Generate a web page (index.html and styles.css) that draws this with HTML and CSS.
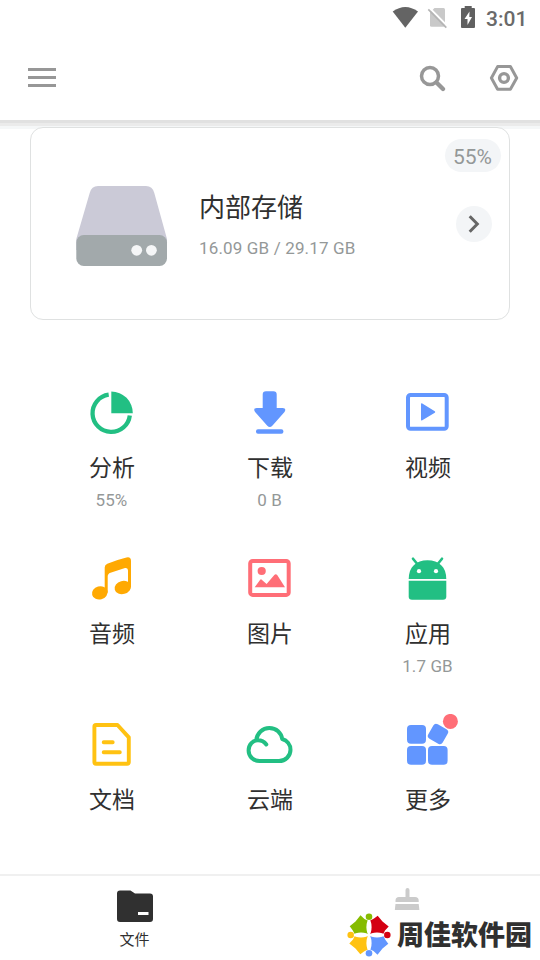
FILE: index.html
```html
<!DOCTYPE html>
<html lang="zh-CN">
<head>
<meta charset="utf-8">
<title>文件</title>
<link rel="stylesheet" href="styles.css">
</head>
<body>
<div class="screen">
  <div class="status">
    <svg width="84" height="24" viewBox="392 5 84 24">
      <path fill="#646464" d="M392.7 11.5Q405.3 2.5 418 11.5L405.3 27.8Z"/>
      <path fill="#c9c9c9" d="M434.5 8H443.5Q445 8 445 9.5V25.2Q445 26.7 443.5 26.7H431.5Q430 26.7 430 25.2V12.5Z"/>
      <path stroke="#fff" stroke-width="2" d="M430 8.5L448 26.8"/>
      <path stroke="#b5b5b5" stroke-width="1.7" d="M428.3 9.3L446.3 27.7"/>
      <path fill="#606060" d="M464.7 6H471.7V8H474Q475 8 475 9V27Q475 28 474 28H462Q461 28 461 27V9Q461 8 462 8H464.7Z"/>
      <path fill="#fff" d="M469.5 11.5L464.5 19H467.5V25L472 17H469.3Z"/>
    </svg>
    <span class="clock">3:01</span>
  </div>
  <header class="toolbar">
    <svg class="menu" width="28" height="20" viewBox="28 68 28 20"><path stroke="#979797" stroke-width="3" d="M28 69.5H56M28 77.5H56M28 85.5H56"/></svg>
    <svg width="28" height="28" viewBox="418 64 28 28" fill="none" stroke="#979797">
      <circle cx="430" cy="76" r="8.500" stroke-width="3.500"/><path d="M436.500 82.500L443 89" stroke-width="4.300" stroke-linecap="round"/>
    </svg>
    <svg width="30" height="28" viewBox="489 64 30 28" fill="none" stroke="#979797" stroke-linejoin="round">
      <path stroke-width="3" d="M497.600 66.600H510.400L516.700 78L510.400 89.300H497.600L491.400 78Z"/><circle cx="504" cy="78" r="4.400" stroke-width="3.400"/>
    </svg>
  </header>
  <div class="shade"></div>

  <section class="card">
    <svg class="drive" width="92" height="82" viewBox="76 185 92 82">
      <path fill="#cbcad7" d="M98 186H146Q152.500 186 154.300 193L167 239V250H76.300V239L89.700 193Q91.500 186 98 186Z"/>
      <rect x="76.300" y="235" width="90.700" height="31" rx="7.500" fill="#a2a9ab"/>
      <circle cx="136.700" cy="250.300" r="5.400" fill="#f5f6f7"/><circle cx="151.400" cy="250.300" r="5.400" fill="#f5f6f7"/>
    </svg>
    <div class="storage">
      <div class="name">内部存储</div>
      <div class="usage">16.09 GB / 29.17 GB</div>
    </div>
    <div class="side">
      <span class="percent">55%</span>
      <span class="go"><svg width="14" height="20" viewBox="467 214 14 20"><path fill="none" stroke="#666" stroke-width="3" d="M469.700 216.300L477.300 224L469.700 231.700"/></svg></span>
    </div>
  </section>

  <main class="grid">
    <div class="item">
      <svg class="icon" viewBox="0 0 60 60">
        <path fill="#22bf83" d="M29.300 31.200V9.500A21.500 21.500 0 0 1 50.800 31.200Z"/>
        <path fill="none" stroke="#22bf83" stroke-width="4.300" d="M26.700 12.700A18.700 18.700 0 1 0 47.800 33.400"/>
      </svg>
      <div class="label">分析</div><div class="sub">55%</div>
    </div>
    <div class="item">
      <svg class="icon" viewBox="0 0 60 60" fill="#6296ff">
        <path d="M26 9.300H33.400Q36.700 9.300 36.700 12.600V26H42.700Q46.800 26.400 44.500 30L32.300 43.700Q29.800 46.200 27.300 43.700L15.100 30Q12.700 26.400 16.700 26H22.700V12.600Q22.700 9.300 26 9.300Z"/>
        <rect x="16" y="47.200" width="27.400" height="4.500" rx="2"/>
      </svg>
      <div class="label">下载</div><div class="sub">0 B</div>
    </div>
    <div class="item">
      <svg class="icon" viewBox="0 0 60 60">
        <rect x="10" y="13" width="38.700" height="33.800" rx="2.500" fill="none" stroke="#6296ff" stroke-width="4"/>
        <path fill="#6296ff" d="M23 22.300Q23 20.800 24.300 21.600L36.800 29.300Q37.800 30 36.800 30.700L24.300 38.200Q23 39 23 37.500Z"/>
      </svg>
      <div class="label">视频</div>
    </div>
    <div class="item">
      <svg class="icon" viewBox="0 0 60 60" fill="#ffa902">
        <path d="M22.700 42V19.500Q22.700 16.800 25.300 15.700Q35 11.800 44.500 9.500Q49 8.500 49 13V39H46V22.500Q46 19.400 43 20.100L28.500 24.800Q25.700 25.700 25.700 28.500V45Z"/>
        <ellipse cx="17.800" cy="44.900" rx="7.900" ry="6.600" transform="rotate(-15 17.800 44.900)"/>
        <ellipse cx="40.800" cy="39.500" rx="8.300" ry="6.500" transform="rotate(-15 40.800 39.500)"/>
      </svg>
      <div class="label">音频</div>
    </div>
    <div class="item">
      <svg class="icon" viewBox="0 0 60 60" fill="#ff6e77">
        <rect x="10.200" y="13" width="38.500" height="33.900" rx="2.500" fill="none" stroke="#ff6e77" stroke-width="4"/>
        <circle cx="21.700" cy="23" r="4.100"/>
        <path d="M14.700 39.200L20 31.900Q21 30.800 22 31.900L26.600 36L34.300 27Q35.700 25.500 37.200 27L45 39.200Z"/>
      </svg>
      <div class="label">图片</div>
    </div>
    <div class="item">
      <svg class="icon" viewBox="0 0 60 60" fill="#22bf83">
        <path d="M10.700 31C10.700 19 18 12.200 29.500 12.200S48.300 19 48.300 31Z"/>
        <path d="M10.700 32.700H48.300V48.500Q48.300 51.700 45 51.700H14Q10.700 51.700 10.700 48.500Z"/>
        <path fill="none" stroke="#22bf83" stroke-width="2.600" stroke-linecap="round" d="M15 10.700L19.500 16.200M44 10.700L39.500 16.200"/>
        <circle cx="21" cy="23.200" r="2.100" fill="#fff"/><circle cx="38" cy="23.200" r="2.100" fill="#fff"/>
      </svg>
      <div class="label">应用</div><div class="sub">1.7 GB</div>
    </div>
    <div class="item">
      <svg class="icon" viewBox="0 0 60 60" fill="none" stroke="#ffc212" stroke-width="3.900" stroke-linejoin="round" stroke-linecap="round">
        <path d="M14 11H35.500L46.800 23.400V48Q46.800 49.700 45 49.700H14Q12.400 49.700 12.400 48V12.700Q12.400 11 14 11Z"/>
        <path d="M21.700 28.300H30.700M21.700 38.300H37.800"/>
      </svg>
      <div class="label">文档</div>
    </div>
    <div class="item">
      <svg class="icon" viewBox="0 0 60 60" fill="none" stroke="#22bf83" stroke-width="4" stroke-linejoin="round" stroke-linecap="round">
        <path d="M16.200 26.400C17 19 22.500 14 29.300 14C36.500 14 41.300 19 42.200 25C47 26.400 50.500 30.500 50.500 35.700C50.500 42 45.500 47 39 47H19.500C13.500 47 8.600 42.500 8.600 36.500C8.600 30.500 13 26.300 18 26.300C21.500 26.300 24.300 27.800 26.300 30.500"/>
      </svg>
      <div class="label">云端</div>
    </div>
    <div class="item">
      <svg class="icon" viewBox="0 0 60 60" fill="#6296ff">
        <rect x="9" y="11" width="19" height="18.800" rx="4"/><rect x="9" y="32" width="19" height="18.800" rx="4"/><rect x="30" y="32" width="19.600" height="18.800" rx="4"/>
        <rect x="31.700" y="11.700" width="16.600" height="16.600" rx="3.300" transform="rotate(30 40 20)"/>
        <circle cx="52.400" cy="7.400" r="7.500" fill="#ff6e77"/>
      </svg>
      <div class="label">更多</div>
    </div>
  </main>

  <nav class="tabs">
    <div class="tab files">
      <svg width="36" height="33" viewBox="117 890 36 33">
        <path fill="#303030" d="M120 890.500H130.500L135 893.500H150Q153 893.500 153 896.500V919Q153 922 150 922H120Q117 922 117 919V893.500Q117 890.500 120 890.500Z"/>
        <path stroke="#fff" stroke-width="3" d="M138 913.500H148.500"/>
      </svg>
      <span>文件</span>
    </div>
    <div class="tab clean">
      <svg width="26" height="24" viewBox="394 887 26 24" fill="#cbcbcb">
        <path d="M405.500 897V890Q405.500 888 407.500 888T409.500 890V897H415Q418.700 897 418.700 900.500V902H395.500V900.500Q395.500 897 399 897Z"/>
        <path d="M395.500 904H418.700L419.400 910H394.800Z"/>
      </svg>
    </div>
  </nav>
  <div class="brand">
    <svg width="44" height="44" viewBox="-22 -22 44 44">
      <g fill="#86bc00"><circle cy="-18.300" r="3.300"/><path d="M0 0L-14 -.5L-16.500 -5L-19.300 -8.700L-13.500 -13.500L-8.500 -19.700L-4.500 -16L-.5 -14Z"/></g>
      <g fill="#d40012" transform="rotate(90)"><circle cy="-18.300" r="3.300"/><path d="M0 0L-14 -.5L-16.500 -5L-19.300 -8.700L-13.500 -13.500L-8.500 -19.700L-4.500 -16L-.5 -14Z"/></g>
      <g fill="#6296ff" transform="rotate(180)"><circle cy="-18.300" r="3.300"/><path d="M0 0L-14 -.5L-16.500 -5L-19.300 -8.700L-13.500 -13.500L-8.500 -19.700L-4.500 -16L-.5 -14Z"/></g>
      <g fill="#ffc212" transform="rotate(270)"><circle cy="-18.300" r="3.300"/><path d="M0 0L-14 -.5L-16.500 -5L-19.300 -8.700L-13.500 -13.500L-8.500 -19.700L-4.500 -16L-.5 -14Z"/></g>
      <g fill="#fff"><ellipse cy="-8" rx="2.600" ry="7.300"/><ellipse cy="8" rx="2.600" ry="7.300"/><ellipse cx="-8" rx="7.300" ry="2.600"/><ellipse cx="8" rx="7.300" ry="2.600"/><circle r="2"/></g>
    </svg>
    <span>周佳软件园</span>
  </div>
</div>
</body>
</html>
```

FILE: styles.css
```css
* { box-sizing: border-box; }
body { margin: 0; background: #fff; font-family: Roboto, "Noto Sans CJK SC", sans-serif; color: #303030; }
svg { display: block; flex: none; }
.screen { position: relative; width: 540px; height: 960px; display: flex; flex-direction: column; overflow: hidden; }
.status { height: 36px; padding: 5px 13px 0 0; display: flex; justify-content: flex-end; gap: 10px; }
.clock { font-size: 21px; line-height: 28px; font-weight: 500; color: #6a6a6a; width: 41px; white-space: nowrap; }
.toolbar { height: 84px; padding: 0 21px 0 28px; display: flex; align-items: center; gap: 43px; }
.menu { margin: 0 auto 1px 0; }
.shade { height: 9px; flex: none; background: linear-gradient(#e1e1e1 3px, #ebebeb 3px, #ebebeb 6px, #f5f7f8 6px); }
.card { height: 193px; flex: none; margin: -2px 30px 0; padding: 11px 8px 0 45px; border: 1px solid #dfe1e1; border-radius: 13px; display: flex; background: #fff; }
.drive { margin-top: 46px; }
.storage { margin: 50px 0 0 31px; }
.name { font-size: 26px; line-height: 38px; }
.usage { margin-top: 9px; font-size: 17px; line-height: 24px; letter-spacing: 0.15px; color: #949898; white-space: nowrap; }
.side { margin-left: auto; width: 57px; display: flex; flex-direction: column; align-items: center; }
.percent { width: 56px; height: 33px; line-height: 36px; border-radius: 17px; background: #f3f5f7; color: #949898; font-size: 21px; text-align: center; }
.go { width: 36px; height: 36px; margin: 34px 0 0 3px; border-radius: 50%; background: #f3f5f7; display: flex; align-items: center; justify-content: center; }
.grid { flex: none; width: 474px; height: 498px; margin: 62px 0 0 33px; display: grid; grid-template-columns: repeat(3, 158px); grid-template-rows: repeat(3, 166px); }
.item { display: flex; flex-direction: column; align-items: center; }
.icon { width: 60px; height: 60px; }
.label { margin-top: 10px; font-size: 23px; line-height: 33px; }
.sub { margin-top: 5px; padding-right: 1px; font-size: 17px; line-height: 20px; letter-spacing: 0.1px; color: #949898; }
.tabs { height: 86px; flex: none; margin-top: -6px; border-top: 2px solid #f0f0f0; display: flex; background: #fff; }
.tab { flex: 1; padding-top: 14px; display: flex; flex-direction: column; align-items: center; font-size: 15px; line-height: 20px; }
.files { padding-left: 1px; }
.tab span { margin-top: 7px; }
.clean { padding: 11px 0 0 5px; }
.brand { position: absolute; left: 347px; top: 912px; display: flex; align-items: center; gap: 6px; font-size: 27px; line-height: 44px; font-weight: 900; white-space: nowrap; }
.brand span { padding-top: 2px; }
```
